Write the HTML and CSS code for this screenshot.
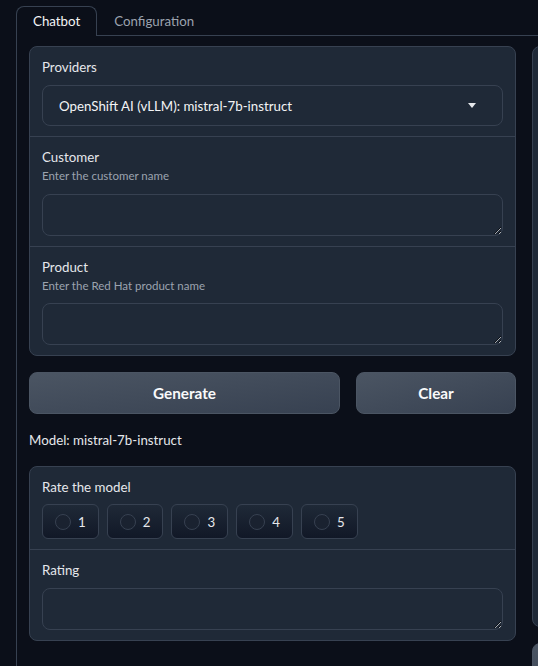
FILE: index.html
```html
<!DOCTYPE html>
<html lang="en">
<head>
<meta charset="utf-8">
<title>Chatbot</title>
<link rel="stylesheet" href="styles.css">
</head>
<body>
<div class="app">
  <div class="tabs">
    <div class="tab-nav">
      <button class="tab selected">Chatbot</button>
      <button class="tab">Configuration</button>
    </div>
    <div class="tab-content">
      <div class="row">
        <div class="col col-left">
          <div class="panel">
            <div class="block">
              <div class="label">Providers</div>
              <div class="dropdown">
                <span class="dd-text">OpenShift AI (vLLM): mistral-7b-instruct</span>
                <svg class="dd-arrow" width="8" height="5" viewBox="0 0 8 5"><path d="M0 0 L8 0 L4 5 Z" fill="#e5e7eb"/></svg>
              </div>
            </div>
            <div class="block">
              <div class="label">Customer</div>
              <div class="info">Enter the customer name</div>
              <textarea class="textbox" rows="1"></textarea>
            </div>
            <div class="block">
              <div class="label">Product</div>
              <div class="info">Enter the Red Hat product name</div>
              <textarea class="textbox" rows="1"></textarea>
            </div>
          </div>
          <div class="btn-row">
            <button class="btn btn-generate">Generate</button>
            <button class="btn btn-clear">Clear</button>
          </div>
          <div class="model">Model: mistral-7b-instruct</div>
          <div class="panel">
            <div class="block">
              <div class="label label-rate">Rate the model</div>
              <div class="radios">
                <label class="radio"><span class="circle"></span><span>1</span></label>
                <label class="radio"><span class="circle"></span><span>2</span></label>
                <label class="radio"><span class="circle"></span><span>3</span></label>
                <label class="radio"><span class="circle"></span><span>4</span></label>
                <label class="radio"><span class="circle"></span><span>5</span></label>
              </div>
            </div>
            <div class="block">
              <div class="label">Rating</div>
              <textarea class="textbox" rows="1"></textarea>
            </div>
          </div>
        </div>
        <div class="col col-right">
          <div class="panel panel-tall"></div>
          <div class="btn btn-right"></div>
        </div>
      </div>
    </div>
  </div>
</div>
</body>
</html>
```
FILE: styles.css
```css
html, body {
  margin: 0;
  padding: 0;
  background: #0b0f19;
  overflow: hidden;
  height: 100%;
}
body {
  font-family: Lato, "Noto Sans", sans-serif;
  color: #e5e7eb;
  font-size: 13.3px;
}
.app {
  width: 1100px;
  padding: 6px 0 0 16px;
}
.tab-nav {
  display: flex;
  border-bottom: 1px solid #374151;
}
.tab {
  height: 30px;
  box-sizing: border-box;
  border: 1px solid transparent;
  border-bottom: 0;
  margin: 0 0 -1px 0;
  padding: 0 16px;
  background: transparent;
  color: #9ca3af;
  font-family: inherit;
  font-size: 13.3px;
  line-height: 29px;
  border-radius: 8px 8px 0 0;
}
.tab.selected {
  border-color: #374151;
  background: #0b0f19;
  color: #f3f4f6;
}
.tab-content {
  border: 1px solid #374151;
  border-top: 0;
  padding: 10px 12px;
  height: 700px;
}
.row {
  display: flex;
  gap: 16px;
}
.col {
  display: flex;
  flex-direction: column;
  gap: 16px;
}
.col-left { width: 487px; }
.col-right { width: 487px; }
.panel {
  background: #1f2937;
  border: 1px solid #374151;
  border-radius: 8px;
}
.panel-tall { height: 579px; }
.block {
  padding: 10px 12px;
  display: flex;
  flex-direction: column;
}
.block + .block {
  border-top: 1px solid #374151;
}
.label {
  line-height: 20px;
  color: #e5e7eb;
  margin-bottom: 8px;
}
.label-rate { margin-bottom: 7px; }
.info {
  font-size: 11.5px;
  line-height: 18px;
  color: #9ca3af;
  margin-top: -8px;
  margin-bottom: 9px;
}
.block + .block + .block .info { margin-bottom: 8px; }
.dropdown {
  height: 41px;
  box-sizing: border-box;
  border: 1px solid #374151;
  border-radius: 8px;
  display: flex;
  align-items: center;
  justify-content: space-between;
  padding: 0 26px 0 16px;
  color: #f3f4f6;
}
.dd-arrow { display: block; }
.textbox {
  display: block;
  height: 42px;
  box-sizing: border-box;
  background: #1f2937;
  border: 1px solid #374151;
  border-radius: 8px;
  color-scheme: dark;
  resize: vertical;
  margin: 0;
  font-family: inherit;
  font-size: 14px;
  color: #f3f4f6;
  padding: 10px;
}
.btn-row {
  display: flex;
  gap: 16px;
}
.btn {
  height: 42px;
  box-sizing: border-box;
  border: 1px solid #4b5563;
  border-radius: 8px;
  background: linear-gradient(to bottom right, #4b5563, #374151);
  color: #f9fafb;
  font-family: inherit;
  font-size: 15.3px;
  font-weight: 700;
}
.btn-generate { width: 311px; }
.btn-clear { width: 160px; }
.btn-right { width: 487px; }
.model {
  line-height: 20px;
  color: #e5e7eb;
}
.radios {
  display: flex;
  gap: 8px;
}
.radio {
  height: 35px;
  box-sizing: border-box;
  display: flex;
  align-items: center;
  gap: 7px;
  padding: 0 12px;
  border: 1px solid #374151;
  border-radius: 6px;
  background: linear-gradient(to top, #111827, #1f2937);
  color: #e5e7eb;
}
.circle {
  width: 16px;
  height: 16px;
  box-sizing: border-box;
  border-radius: 50%;
  border: 1px solid #374151;
  background: #1a2230;
}
```
